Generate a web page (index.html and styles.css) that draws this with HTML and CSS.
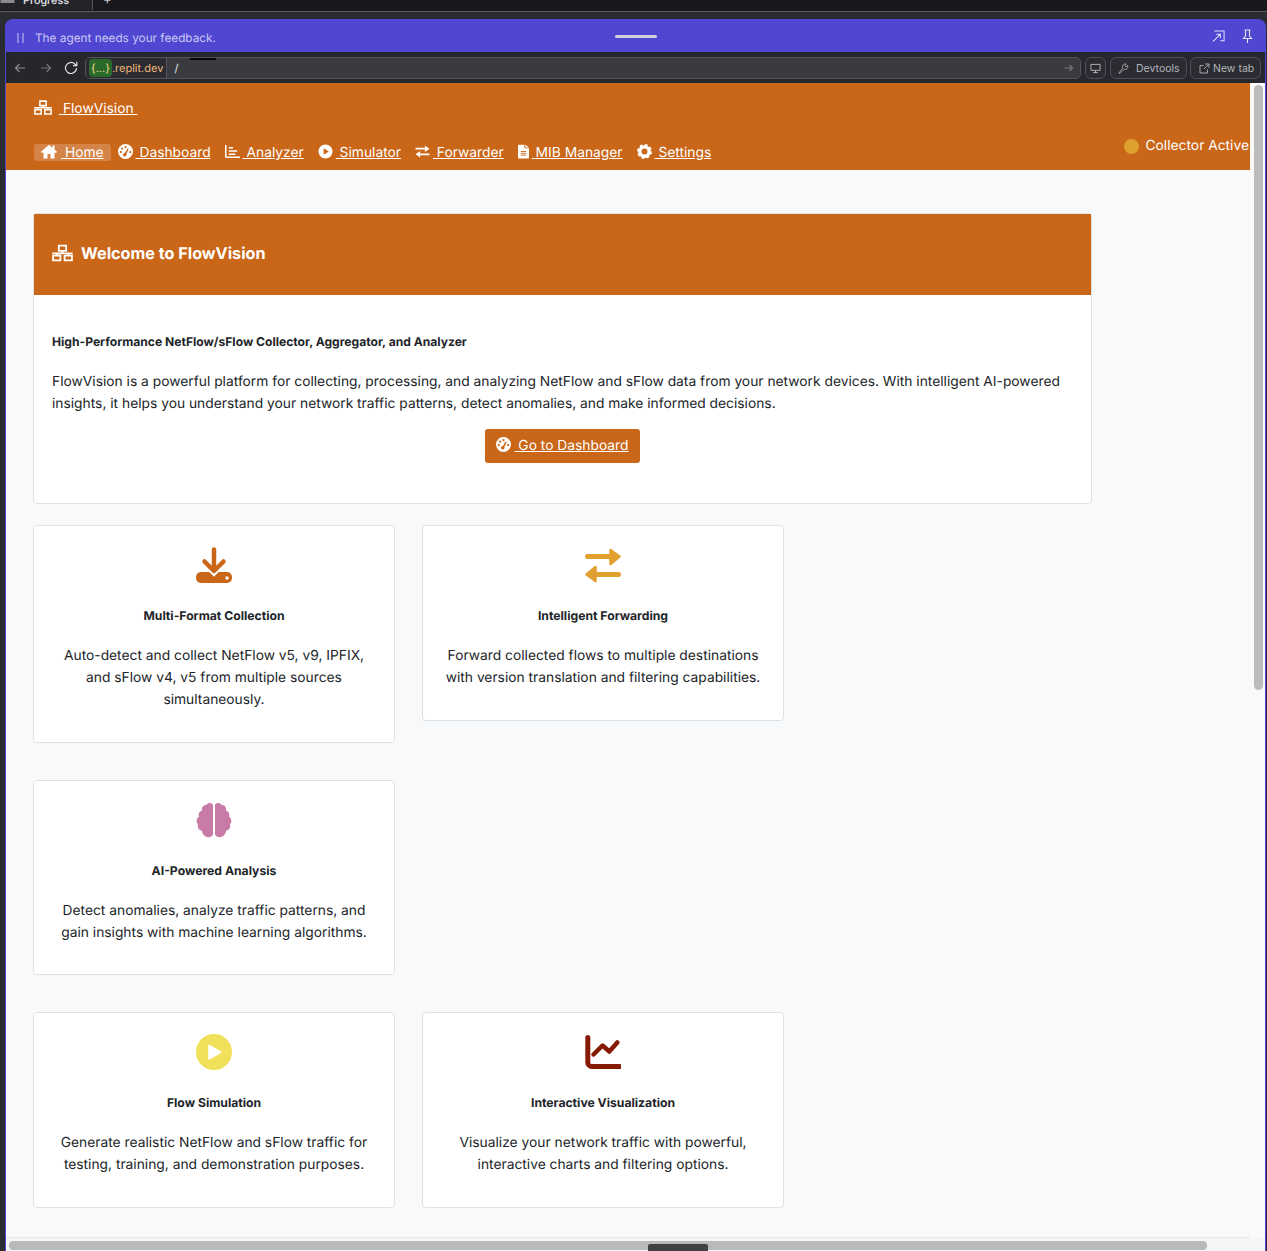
FILE: index.html
```html
<!DOCTYPE html>
<html lang="en">

<head>
    <meta charset="UTF-8">
    <meta name="viewport" content="width=device-width, initial-scale=1.0">
    <title>FlowVision</title>
    <link rel="stylesheet" href="styles.css">
</head>

<body>
    <!-- icons used more than once -->
    <svg class="icon-defs" aria-hidden="true">
        <symbol id="i-network" viewBox="0 0 20 16">
            <path d="M6.500 .9h7v5h-7zM10 5.900v2.400M.3 8.300h19.400M4.500 8.300v2.200M15.500 8.300v2.200M1 10.500h7v4.600H1zM12 10.500h7v4.600h-7z" fill="none" stroke="currentColor" stroke-width="1.700" />
        </symbol>
        <symbol id="i-gauge" viewBox="0 0 16 16">
            <circle cx="8" cy="8" r="8" fill="currentColor" />
            <g fill="#ca6618">
                <circle cx="8" cy="3.200" r="1.200" />
                <circle cx="4.400" cy="4.800" r="1.200" />
                <circle cx="3" cy="8.600" r="1.200" />
                <circle cx="13" cy="8.600" r="1.200" />
                <circle cx="7.200" cy="11.400" r="1.900" />
                <path d="M6.600 11l3.600-6.200 1.200.6-3 6.400z" />
            </g>
        </symbol>
    </svg>

    <div class="tabstrip">
        <div class="tab">
            <svg class="tab-icon" viewBox="0 0 14 10"><path d="M0 0h14v8H0z" fill="#8a8b92" /></svg>
            <span>Progress</span>
        </div>
        <span class="tab-plus">+</span>
    </div>
    <div class="tabstrip-under"></div>

    <div class="window">
        <div class="agent-bar">
            <svg class="pause" viewBox="0 0 7 10"><path d="M1 0v10M6 0v10" stroke="#b9b5ee" stroke-width="1.200" /></svg>
            <span class="agent-text">The agent needs your feedback.</span>
            <span class="drag-handle"></span>
            <svg class="agent-icon" viewBox="0 0 14 14" fill="none" stroke="#e4e2fa" stroke-width="1.100">
                <path d="M2.500 1.500h10.500v10.500h-4M1 13l8-8M4.500 5h4.500v4.500" />
            </svg>
            <svg class="agent-icon agent-pin" viewBox="0 0 12 14" fill="none" stroke="#e4e2fa" stroke-width="1.100">
                <path d="M3 1h6M4 1v6L2 9.500h8L8 7V1M6 9.500V14" />
            </svg>
        </div>

        <div class="toolbar">
            <svg class="nav-arrow" viewBox="0 0 12 12" fill="none" stroke="#8b8c92" stroke-width="1.200"><path d="M11 6H1.500M5.500 2l-4 4 4 4" /></svg>
            <svg class="nav-arrow forward" viewBox="0 0 12 12" fill="none" stroke="#74757b" stroke-width="1.200"><path d="M1 6h9.500M6.500 2l4 4-4 4" /></svg>
            <svg class="reload" viewBox="0 0 14 14" fill="none" stroke="#e4e4e8" stroke-width="1.200"><path d="M12.500 7a5.500 5.500 0 1 1-1.700-4L12.500 4.500M12.800 .8v3.800H9" /></svg>
            <div class="address">
                <div class="domain"><span class="chip">{...}</span>.replit.dev</div>
                <span class="path">/</span>
                <span class="redacted"></span>
                <svg class="go" viewBox="0 0 10 10" fill="none" stroke="#77787e" stroke-width="1.100"><path d="M.5 5h8M5.500 2l3 3-3 3" /></svg>
            </div>
            <button class="tool-btn screen-btn">
                <svg viewBox="0 0 12 11" fill="none" stroke="#b9bac0" stroke-width="1"><path d="M1 1h10v6.500H1zM6 7.500V10M3.500 10h5" /></svg>
            </button>
            <button class="tool-btn devtools-btn">
                <svg viewBox="0 0 12 12" fill="none" stroke="#a5a6ac" stroke-width="1"><path d="M1 11l4.200-5.500a3 3 0 0 1 3.800-4.200L7.500 3l1.200 1.200 1.800-1.500A3 3 0 0 1 6.700 6.800L2 11.500z" /></svg>
                <span>Devtools</span>
            </button>
            <button class="tool-btn newtab-btn">
                <svg viewBox="0 0 11 11" fill="none" stroke="#a5a6ac" stroke-width="1"><path d="M8.500 6.500v3.500h-7.500v-7.500h3.500M6 1h4v4M10 1L5 6" /></svg>
                <span>New tab</span>
            </button>
        </div>

        <div class="viewport">
            <div class="page">
                <nav class="navbar">
                    <a class="brand" href="#"><svg class="nav-icon brand-icon"><use href="#i-network" /></svg>&nbsp;FlowVision&nbsp;</a>
                    <div class="nav-row">
                        <a class="nav-link active" href="#">
                            <svg class="nav-icon" viewBox="0 0 16 14"><path d="M8 .3L0 7.300 1.100 8.800 2.500 7.600V14h4V9.500h3V14h4V7.600l1.400 1.200L16 7.300l-2.500-2.200V1h-2v2.400z" fill="currentColor" /></svg>&nbsp;Home</a>
                        <a class="nav-link" href="#"><svg class="nav-icon"><use href="#i-gauge" /></svg>&nbsp;Dashboard</a>
                        <a class="nav-link" href="#">
                            <svg class="nav-icon" viewBox="0 0 16 14"><path d="M.8 0v12.200a1 1 0 0 0 1 1H16M4 3h4.500M4 6.400h9M4 9.800h7" fill="none" stroke="currentColor" stroke-width="1.600" /></svg>&nbsp;Analyzer</a>
                        <a class="nav-link" href="#">
                            <svg class="nav-icon" viewBox="0 0 16 16"><circle cx="8" cy="8" r="7.500" fill="currentColor" /><path d="M6 4.500L11.500 8 6 11.500z" fill="#ca6618" /></svg>&nbsp;Simulator</a>
                        <a class="nav-link" href="#">
                            <svg class="nav-icon" viewBox="0 0 16 14"><path d="M.5 4h10M15.500 10H5" stroke="currentColor" stroke-width="1.800" /><path d="M10.500 .5L15.500 4l-5 3.500zM5.500 6.500L.5 10l5 3.500z" fill="currentColor" /></svg>&nbsp;Forwarder</a>
                        <a class="nav-link" href="#">
                            <svg class="nav-icon file-icon" viewBox="0 0 12 15"><path d="M0 1a1 1 0 0 1 1-1h6v4h5v10a1 1 0 0 1-1 1H1a1 1 0 0 1-1-1zM8 0l4 3H8z" fill="currentColor" /><path d="M3 7.500h6M3 9.500h6M3 11.500h6" stroke="#ca6618" stroke-width="1" /></svg>&nbsp;MIB Manager</a>
                        <a class="nav-link" href="#">
                            <svg class="nav-icon" viewBox="0 0 16 16"><circle cx="8" cy="8" r="5" fill="none" stroke="currentColor" stroke-width="3.600" /><circle cx="8" cy="8" r="7" fill="none" stroke="currentColor" stroke-width="2" stroke-dasharray="3.100 2.400" /></svg>&nbsp;Settings</a>
                        <div class="collector-status">
                            <span class="status-dot"></span>
                            <span>Collector Active</span>
                        </div>
                    </div>
                </nav>

                <main class="content">
                    <section class="welcome-card">
                        <header class="welcome-header">
                            <svg class="welcome-icon"><use href="#i-network" /></svg>
                            <h1>Welcome to FlowVision</h1>
                        </header>
                        <div class="welcome-body">
                            <h2>High-Performance NetFlow/sFlow Collector, Aggregator, and Analyzer</h2>
                            <p>FlowVision is a powerful platform for collecting, processing, and analyzing NetFlow and sFlow data from your network devices. With intelligent AI-powered insights, it helps you understand your network traffic patterns, detect anomalies, and make informed decisions.</p>
                            <div class="welcome-action">
                                <a class="btn-dashboard" href="#"><svg class="btn-icon"><use href="#i-gauge" /></svg>&nbsp;Go to Dashboard</a>
                            </div>
                        </div>
                    </section>

                    <div class="feature-row first-row">
                        <article class="feature-card tall">
                            <svg class="feature-icon" viewBox="0 0 36 36">
                                <rect y="25" width="36" height="11" rx="5" fill="#ca6618" />
                                <path d="M7 13l11 11 11-11" fill="none" stroke="#fff" stroke-width="8" />
                                <path d="M18 2.500v20M8.500 14.500L18 24l9.500-9.500" fill="none" stroke="#ca6618" stroke-width="4.500" stroke-linecap="round" stroke-linejoin="round" />
                                <circle cx="31" cy="31" r="1.700" fill="#fff" />
                            </svg>
                            <h3>Multi-Format Collection</h3>
                            <p>Auto-detect and collect NetFlow v5, v9, IPFIX, and sFlow v4, v5 from multiple sources simultaneously.</p>
                        </article>
                        <article class="feature-card">
                            <svg class="feature-icon" viewBox="0 0 36 36">
                                <path d="M2.500 9.500h24M33.500 27.500H10" stroke="#e19f30" stroke-width="5" stroke-linecap="round" />
                                <path d="M25.500 3L34.500 9.500 25.500 17zM10.500 20L1.500 27.500 10.500 34z" fill="#e19f30" stroke="#e19f30" stroke-width="2.500" stroke-linejoin="round" />
                            </svg>
                            <h3>Intelligent Forwarding</h3>
                            <p>Forward collected flows to multiple destinations with version translation and filtering capabilities.</p>
                        </article>
                    </div>

                    <div class="feature-row">
                        <article class="feature-card">
                            <svg class="feature-icon" viewBox="0 0 36 36" fill="#c87ba6">
                                <path d="M17 3C16 .8 12 .2 10.500 3 7.500 2.600 5.200 5.500 6 8.500 3 9.500 2 12.500 3 14.800 .4 16.200-.2 20 2 22.300 1 25.500 3 28.500 6 28.800 6 32 9 35 12 35.200 14.500 35.600 17 34 17 32z" />
                                <path transform="matrix(-1 0 0 1 36 0)" d="M17 3C16 .8 12 .2 10.500 3 7.500 2.600 5.200 5.500 6 8.500 3 9.500 2 12.500 3 14.800 .4 16.200-.2 20 2 22.300 1 25.500 3 28.500 6 28.800 6 32 9 35 12 35.200 14.500 35.600 17 34 17 32z" />
                            </svg>
                            <h3>AI-Powered Analysis</h3>
                            <p>Detect anomalies, analyze traffic patterns, and gain insights with machine learning algorithms.</p>
                        </article>
                    </div>

                    <div class="feature-row">
                        <article class="feature-card">
                            <svg class="feature-icon" viewBox="0 0 36 36">
                                <circle cx="18" cy="18" r="18" fill="#f1e05a" />
                                <path d="M13 11.500L25 18.200 13 25z" fill="#fff" stroke="#fff" stroke-width="1.500" stroke-linejoin="round" />
                            </svg>
                            <h3>Flow Simulation</h3>
                            <p>Generate realistic NetFlow and sFlow traffic for testing, training, and demonstration purposes.</p>
                        </article>
                        <article class="feature-card">
                            <svg class="feature-icon" viewBox="0 0 36 36" fill="none" stroke="#861a04" stroke-linecap="round" stroke-linejoin="round">
                                <path d="M2.800 3.500v25a4 4 0 0 0 4 4H34.500" stroke-width="5" />
                                <path d="M8.500 20.500L17.500 11.500 24.300 17.500 32.300 8.500" stroke-width="4.500" />
                            </svg>
                            <h3>Interactive Visualization</h3>
                            <p>Visualize your network traffic with powerful, interactive charts and filtering options.</p>
                        </article>
                    </div>
                </main>
            </div>
            <div class="vscroll"><span class="vthumb"></span></div>
        </div>

        <div class="hscroll"><span class="hthumb"></span></div>
        <span class="dock-tab"></span>
    </div>
</body>

</html>
```

FILE: styles.css
```css
* {
    box-sizing: border-box;
}

html,
body {
    height: 100%;
}

body {
    margin: 0;
    background-color: #2b2c31;
    font-family: 'Inter', 'Liberation Sans', sans-serif;
    color: #212529;
    overflow: hidden;
    text-rendering: geometricPrecision;
}

.icon-defs {
    display: none;
}

/* top strip, mostly cut off by the screenshot */
.tabstrip {
    display: flex;
    height: 12px;
    background-color: #19191d;
    border-bottom: 1px solid #5b5c62;
    overflow: hidden;
}

.tab {
    display: flex;
    align-items: center;
    gap: 8px;
    width: 93px;
    height: 20px;
    margin-top: -10px;
    background-color: #232428;
    border-right: 1px solid #55565c;
    color: #e4e4e8;
    font-size: 10.8px;
    font-weight: 500;
}

.tab-icon {
    width: 15px;
    height: 10px;
}

.tab-plus {
    margin: -10px 0 0 10px;
    color: #c8c8cc;
    font-size: 13px;
    line-height: 20px;
}

.tabstrip-under {
    height: 7px;
}

.window {
    position: relative;
    height: 1232px;
    margin-left: 5px;
    margin-right: 1px;
    background-color: #4f46d1;
    border-radius: 8px 8px 0 0;
    overflow: hidden;
}

.agent-bar {
    display: flex;
    align-items: center;
    height: 33px;
    padding: 4px 0 0 12px;
}

.pause {
    flex-shrink: 0;
    width: 7px;
    height: 10px;
}

.agent-text {
    flex-shrink: 0;
    width: 580px;
    margin-left: 11px;
    color: #c9c6f1;
    font-size: 11.8px;
}

.drag-handle {
    flex-shrink: 0;
    width: 42px;
    height: 3px;
    margin-top: -2px;
    background-color: #cfcfe0;
    border-radius: 2px;
}

.agent-icon {
    flex-shrink: 0;
    width: 13px;
    height: 14px;
    margin-left: 555px;
    margin-top: -3px;
}

.agent-pin {
    margin-left: 16px;
}

.toolbar {
    display: flex;
    align-items: center;
    height: 31px;
    margin: 0 1px;
    padding: 1px 4px 0 8px;
    background-color: #26272c;
}

.nav-arrow {
    flex-shrink: 0;
    width: 12px;
    height: 12px;
}

.forward {
    margin-left: 14px;
}

.reload {
    flex-shrink: 0;
    width: 14px;
    height: 14px;
    margin-left: 12px;
}

.address {
    position: relative;
    display: flex;
    align-items: center;
    flex: 1;
    height: 22px;
    margin-left: 7px;
    background-color: #3a3b40;
    border: 1px solid #53545c;
    border-radius: 5px;
    font-size: 11px;
}

.domain {
    display: flex;
    align-items: center;
    height: 100%;
    padding: 0 3px;
    background-color: #2b2c31;
    border-right: 1px solid #53545c;
    border-radius: 4px 0 0 4px;
    color: #f0b878;
}

.chip {
    padding: 2px;
    background-color: #2a6a2a;
    border-radius: 4px;
    color: #f3d58a;
}

.path {
    margin-left: 7px;
    color: #e8e8ec;
}

.redacted {
    position: absolute;
    left: 104px;
    top: 0;
    width: 26px;
    height: 2px;
    background-color: #050505;
}

.go {
    width: 10px;
    height: 10px;
    margin-left: auto;
    margin-right: 6px;
}

.tool-btn {
    display: flex;
    flex-shrink: 0;
    align-items: center;
    height: 22px;
    margin-left: 4px;
    padding: 0 7px;
    background-color: #2b2c31;
    border: 1px solid #4e4f58;
    border-radius: 6px;
    color: #b4b5bb;
    font-family: inherit;
    font-size: 10.5px;
    white-space: nowrap;
}

.tool-btn svg {
    flex-shrink: 0;
    width: 11px;
    height: 11px;
}

.screen-btn {
    width: 21px;
    padding: 0 4px;
}

.devtools-btn {
    gap: 7px;
    width: 77px;
}

.newtab-btn {
    gap: 3px;
    width: 71px;
    margin-left: 3px;
    padding-left: 8px;
}

.viewport {
    display: flex;
    height: 1155px;
    margin: 0 1px;
    background-color: #fff;
}

.page {
    flex: 1;
    min-width: 0;
    background-color: #f8f9fa;
    border-bottom: 1px solid #e6e7e9;
    overflow: hidden;
}

.vscroll {
    flex-shrink: 0;
    width: 15px;
    padding: 2px 2px 0 4px;
    background-color: #fafafa;
}

.vthumb {
    display: block;
    height: 605px;
    background-color: #bcbcbc;
    border-radius: 5px;
}

.hscroll {
    height: 13px;
    margin: 0 1px;
    padding: 3px 0 1px 3px;
    background-color: #f5f5f5;
}

.hthumb {
    display: block;
    width: 1198px;
    height: 9px;
    background-color: #bababa;
    border-radius: 4px;
}

.dock-tab {
    position: absolute;
    left: 643px;
    bottom: 0;
    width: 60px;
    height: 7px;
    background-color: #404045;
    border-radius: 2px 2px 0 0;
}

/* app navbar */
.navbar {
    height: 87px;
    padding: 14px 0 0 28px;
    background-color: #ca6618;
    color: #fff;
    font-size: 13.8px;
    line-height: 24px;
}

.navbar a {
    color: #fff;
}

.brand {
    display: block;
    width: max-content;
}

.nav-row {
    display: flex;
    align-items: flex-start;
    margin-top: 13px;
}

.nav-icon {
    width: 15px;
    height: 15px;
    margin-right: 3px;
    vertical-align: -2px;
}

.brand-icon {
    width: 18px;
    height: 15px;
    margin-right: 7px;
}

.file-icon {
    width: 11px;
}

.nav-link {
    margin: 7px 14px 0 0;
    white-space: nowrap;
    line-height: 24px;
}

.nav-link.active {
    display: block;
    height: 17px;
    margin-top: 10px;
    margin-right: 7px;
    padding: 0 7px;
    background-color: rgba(255, 255, 255, 0.2);
    border-radius: 3px;
    line-height: 17px;
}

.nav-link.active .nav-icon {
    width: 16px;
    margin-right: 4px;
}

.collector-status {
    display: flex;
    align-items: center;
    gap: 7px;
    margin-left: auto;
    padding-right: 1px;
    white-space: nowrap;
}

.status-dot {
    width: 15px;
    height: 15px;
    background-color: #e0a030;
    border-radius: 50%;
}

/* page content */
.content {
    width: 1086px;
    padding: 43px 0 0 27px;
}

.welcome-card {
    height: 291px;
    background-color: #fff;
    border: 1px solid #dfe2e5;
    border-radius: 4px;
}

.welcome-header {
    display: flex;
    align-items: center;
    gap: 8px;
    height: 81px;
    padding: 0 18px 3px;
    background-color: #ca6618;
    color: #fff;
}

.welcome-icon {
    width: 21px;
    height: 18px;
}

.welcome-header h1 {
    margin: 0;
    font-size: 16.2px;
    font-weight: 700;
}

.welcome-body {
    padding: 37px 18px 0;
}

.welcome-body h2 {
    margin: 0 0 19px;
    font-size: 12.1px;
    font-weight: 700;
    line-height: 20px;
}

.welcome-body p {
    margin: 0 0 14px;
    font-size: 13.8px;
    line-height: 22px;
}

.welcome-action {
    text-align: center;
}

.btn-dashboard {
    display: inline-block;
    height: 34px;
    padding: 0 11px;
    background-color: #ca6618;
    border-radius: 3px;
    color: #fff;
    font-size: 13.8px;
    line-height: 35px;
}

.btn-icon {
    width: 15px;
    height: 15px;
    margin-right: 3px;
    vertical-align: -2px;
}

.feature-row {
    display: flex;
    align-items: flex-start;
    gap: 27px;
    margin-top: 37px;
}

.first-row {
    margin-top: 21px;
}

.feature-card {
    width: 362px;
    height: 195.6px;
    padding: 21px 18px 0;
    background-color: #fff;
    border: 1px solid #dfe2e5;
    border-radius: 4px;
    text-align: center;
}

.feature-card.tall {
    height: 217.6px;
}

.feature-row:last-child .feature-card {
    height: 196px;
}

.feature-icon {
    display: block;
    width: 36px;
    height: 36px;
    margin: 0 auto;
}

.feature-card h3 {
    margin: 23px 0 19px;
    font-size: 12.2px;
    font-weight: 700;
    line-height: 20px;
}

.feature-card p {
    margin: 0;
    font-size: 13.8px;
    line-height: 22px;
}
```
